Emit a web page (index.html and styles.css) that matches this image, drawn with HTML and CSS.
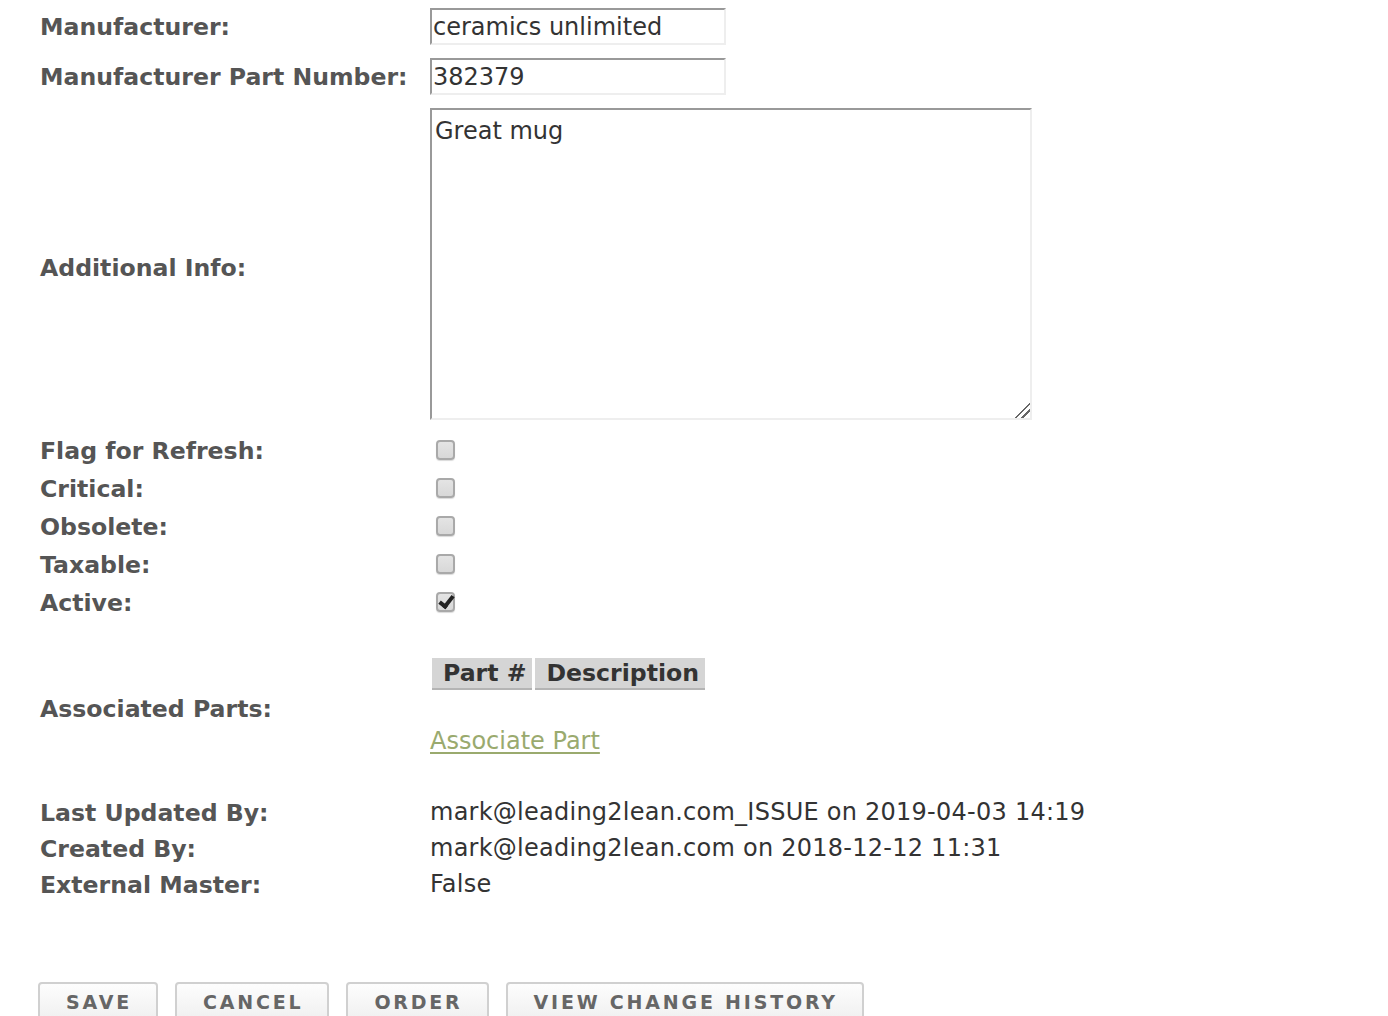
FILE: index.html
```html
<!DOCTYPE html>
<html>
<head>
<meta charset="utf-8">
<link rel="stylesheet" href="styles.css">
</head>
<body>
<form class="form">
  <div class="row row-input">
    <div class="label">Manufacturer:</div>
    <div class="field"><input class="text" type="text" value="ceramics unlimited"></div>
  </div>
  <div class="row row-input">
    <div class="label">Manufacturer Part Number:</div>
    <div class="field"><input class="text" type="text" value="382379"></div>
  </div>
  <div class="row row-area">
    <div class="label label-area">Additional Info:</div>
    <div class="field"><textarea class="area">Great mug</textarea></div>
  </div>
  <div class="checks">
    <div class="row row-check">
      <div class="label">Flag for Refresh:</div>
      <div class="field"><input class="check" type="checkbox"></div>
    </div>
    <div class="row row-check">
      <div class="label">Critical:</div>
      <div class="field"><input class="check" type="checkbox"></div>
    </div>
    <div class="row row-check">
      <div class="label">Obsolete:</div>
      <div class="field"><input class="check" type="checkbox"></div>
    </div>
    <div class="row row-check">
      <div class="label">Taxable:</div>
      <div class="field"><input class="check" type="checkbox"></div>
    </div>
    <div class="row row-check">
      <div class="label">Active:</div>
      <div class="field"><input class="check" type="checkbox" checked></div>
    </div>
  </div>
  <div class="row row-assoc">
    <div class="label">Associated Parts:</div>
    <div class="field">
      <table class="parts">
        <thead>
          <tr><th>Part #</th><th>Description</th></tr>
        </thead>
      </table>
      <a class="link" href="#">Associate Part</a>
    </div>
  </div>
  <div class="meta">
    <div class="row row-meta">
      <div class="label">Last Updated By:</div>
      <div class="value">mark@leading2lean.com_ISSUE on 2019-04-03 14:19</div>
    </div>
    <div class="row row-meta">
      <div class="label">Created By:</div>
      <div class="value">mark@leading2lean.com on 2018-12-12 11:31</div>
    </div>
    <div class="row row-meta">
      <div class="label">External Master:</div>
      <div class="value">False</div>
    </div>
  </div>
  <div class="buttons">
    <button type="button" class="btn">SAVE</button>
    <button type="button" class="btn">CANCEL</button>
    <button type="button" class="btn">ORDER</button>
    <button type="button" class="btn">VIEW CHANGE HISTORY</button>
  </div>
</form>
</body>
</html>
```
FILE: styles.css
```css
html, body {
  margin: 0;
  padding: 0;
  background: #fff;
}
body {
  font-family: "DejaVu Sans", Verdana, sans-serif;
  font-size: 24px;
  color: #333;
  overflow: hidden;
}
.form {
  padding: 8px 0 0 40px;
}
.row {
  display: grid;
  grid-template-columns: 390px 1fr;
  align-items: center;
}
.label {
  font-weight: bold;
  font-size: 23.6px;
  color: #555;
  white-space: nowrap;
  padding-top: 1px;
}
.label-area {
  padding-top: 7px;
}
.row-input {
  margin-bottom: 13px;
}
.text {
  display: block;
  box-sizing: border-box;
  width: 296px;
  height: 37px;
  margin: 0;
  padding: 0 1px;
  font-family: "DejaVu Sans", Verdana, sans-serif;
  font-size: 24px;
  color: #333;
  border-style: solid;
  border-width: 2px;
  border-color: #999 #eee #eee #999;
  background: #fff;
  outline: none;
}
.area {
  display: block;
  box-sizing: border-box;
  width: 602px;
  height: 312px;
  margin: 0;
  padding: 3px 3px;
  font-family: "DejaVu Sans", Verdana, sans-serif;
  font-size: 24px;
  line-height: 36px;
  color: #333;
  border-style: solid;
  border-width: 2px;
  border-color: #999 #eee #eee #999;
  background: #fff;
  resize: both;
  outline: none;
}
.area::-webkit-resizer {
  background: linear-gradient(135deg, transparent 48%, #666 48%, #666 55%, transparent 55%, transparent 70%, #666 70%, #666 77%, transparent 77%);
}
.checks {
  margin-top: 11px;
}
.row-check {
  height: 38px;
}
.row-check .field {
  display: flex;
  align-items: center;
}
.check {
  appearance: none;
  -webkit-appearance: none;
  box-sizing: border-box;
  width: 19px;
  height: 20px;
  margin: 0 0 0 6px;
  border: 2px solid #a9a9a9;
  border-radius: 4px;
  background: linear-gradient(#e4e4e4, #d8d8d8);
  box-shadow: 0 1px 1px rgba(0,0,0,0.15);
  position: relative;
}
.check:checked::after {
  content: "";
  position: absolute;
  left: 4px;
  top: -1px;
  width: 5px;
  height: 11px;
  border: solid #222;
  border-width: 0 4px 4px 0;
  transform: rotate(38deg);
}
.row-assoc {
  margin-top: 37px;
}
.parts {
  border-collapse: separate;
  border-spacing: 3px 0;
  margin-left: -1px;
}
.parts th {
  background: #d5d5d5;
  border-bottom: 2px solid #b4b4b4;
  color: #333;
  font-size: 23.6px;
  font-weight: bold;
  height: 30px;
  line-height: 30px;
  padding: 0 6px 0 11px;
  text-align: left;
}
.link {
  display: inline-block;
  margin-top: 37px;
  padding-bottom: 3px;
  color: #9aaa6e;
  text-decoration: underline;
  text-underline-offset: 3px;
  line-height: 28px;
}
.meta {
  margin-top: 36px;
}
.row-meta {
  height: 36px;
}
.value {
  color: #333;
  white-space: nowrap;
  letter-spacing: 0.25px;
}
.buttons {
  display: flex;
  gap: 17px;
  margin-top: 80px;
  margin-left: -2px;
}
.btn {
  font-family: "DejaVu Sans", Verdana, sans-serif;
  font-size: 19px;
  font-weight: bold;
  letter-spacing: 2.8px;
  color: #666;
  height: 50px;
  padding: 0 24px 10px 26px;
  border: 2px solid #d0d0d0;
  border-radius: 4px 4px 0 0;
  background: linear-gradient(#fdfdfd, #ececec);
  cursor: pointer;
}
```
